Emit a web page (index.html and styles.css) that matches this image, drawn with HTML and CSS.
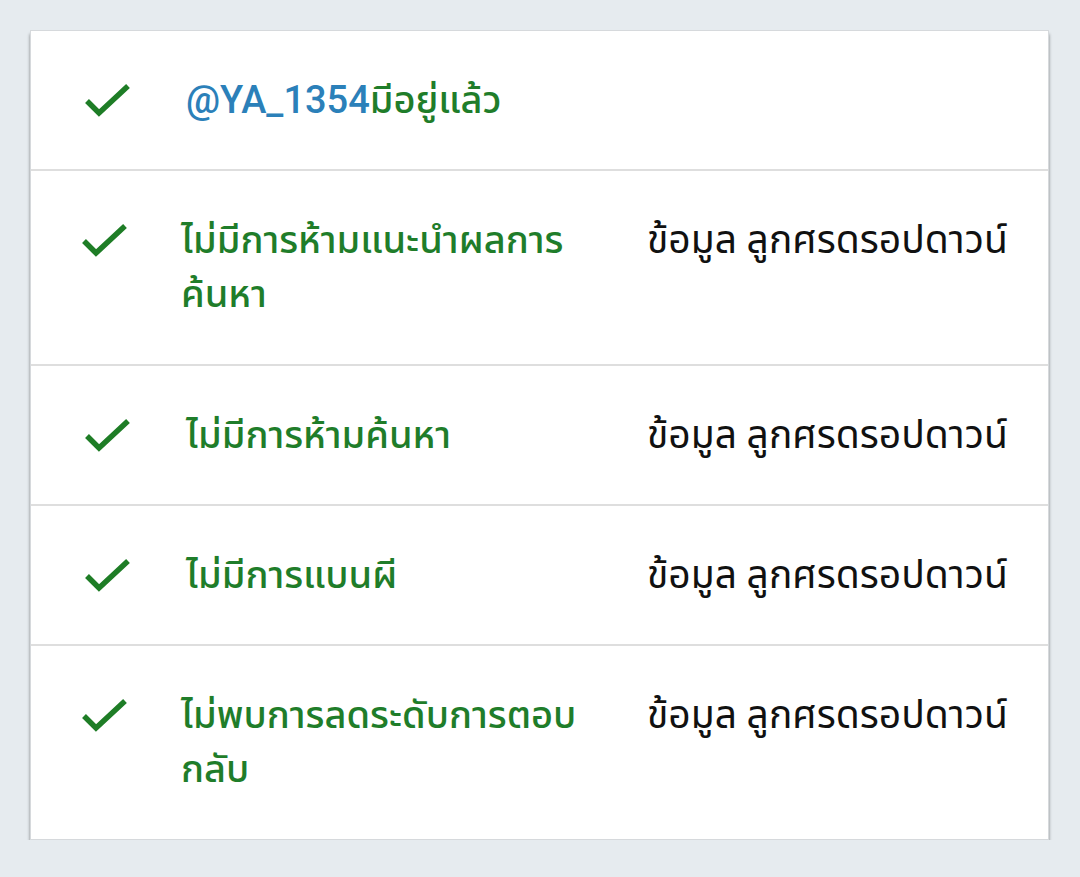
FILE: index.html
```html
<!DOCTYPE html>
<html lang="th">
<head>
<meta charset="UTF-8">
<title>ผลการตรวจสอบบัญชี</title>
<link rel="stylesheet" href="styles.css">
</head>
<body>
	<div class="card">

		<div class="row">
			<div class="check">
				<svg viewBox="0 0 48 36" width="48" height="36"><path d="M3 19 L15 31 L44 4" fill="none" stroke="#1e7d26" stroke-width="5.5"/></svg>
			</div>
			<div class="label"><span class="handle">@YA_1354</span>มีอยู่แล้ว</div>
			<div class="info"></div>
		</div>

		<div class="row row-tall">
			<div class="check">
				<svg viewBox="0 0 48 36" width="48" height="36"><path d="M3 19 L15 31 L44 4" fill="none" stroke="#1e7d26" stroke-width="5.5"/></svg>
			</div>
			<div class="label">ไม่มีการห้ามแนะนำผลการค้นหา</div>
			<div class="info">ข้อมูล ลูกศรดรอปดาวน์</div>
		</div>

		<div class="row">
			<div class="check">
				<svg viewBox="0 0 48 36" width="48" height="36"><path d="M3 19 L15 31 L44 4" fill="none" stroke="#1e7d26" stroke-width="5.5"/></svg>
			</div>
			<div class="label">ไม่มีการห้ามค้นหา</div>
			<div class="info">ข้อมูล ลูกศรดรอปดาวน์</div>
		</div>

		<div class="row">
			<div class="check">
				<svg viewBox="0 0 48 36" width="48" height="36"><path d="M3 19 L15 31 L44 4" fill="none" stroke="#1e7d26" stroke-width="5.5"/></svg>
			</div>
			<div class="label">ไม่มีการแบนผี</div>
			<div class="info">ข้อมูล ลูกศรดรอปดาวน์</div>
		</div>

		<div class="row row-tall">
			<div class="check">
				<svg viewBox="0 0 48 36" width="48" height="36"><path d="M3 19 L15 31 L44 4" fill="none" stroke="#1e7d26" stroke-width="5.5"/></svg>
			</div>
			<div class="label">ไม่พบการลดระดับการตอบกลับ</div>
			<div class="info">ข้อมูล ลูกศรดรอปดาวน์</div>
		</div>

	</div>
</body>
</html>
```

FILE: styles.css
```css
body {
	margin: 0;
	padding: 30px 31px 0 30px;
	background-color: #e6ebef;
	font-family: Roboto, "Noto Sans Thai", "Noto Sans", sans-serif;
	font-size: 38px;
	line-height: 54px;
}

.card {
	background-color: #fff;
	border: 1px solid #d6d9dc;
	box-shadow: 0 4px 3px rgba(0, 0, 0, 0.45);
}

.row {
	display: grid;
	grid-template-columns: 155px 461px 1fr;
	align-items: start;
	padding: 42px 0;
}

.row + .row {
	border-top: 2px solid #dedede;
}

.check {
	height: 54px;
	display: flex;
	align-items: center;
	padding-left: 53px;
}

.label {
	color: #1f7d2a;
	font-weight: 500;
	padding-right: 22px;
}

.handle {
	color: #2b80b9;
}

.info {
	color: #111;
	font-size: 39px;
}

.row-tall {
	padding-bottom: 43px;
}

.row-tall .check {
	padding-left: 50px;
}

.row-tall .label {
	margin-left: -5px;
}
```
